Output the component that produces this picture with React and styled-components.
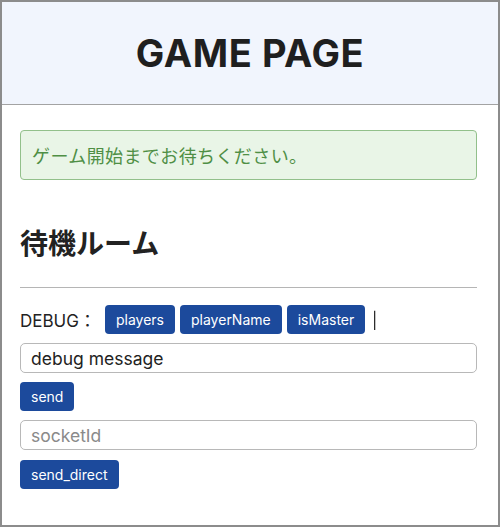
import styled, { createGlobalStyle } from 'styled-components'

const Global = createGlobalStyle`
  html, body { margin:0; padding:0; background:#fff; }
  body { font-family: Inter, "Noto Sans CJK JP", sans-serif; color:#222; }
  * { box-sizing:border-box; }
`;

const Frame = styled.div`
  width:500px;
  height:527px;
  border:2px solid #8c8c8c;
  display:flex;
  flex-direction:column;
`;

const Header = styled.header`
  height:103px;
  background-color:#f1f5fd;
  border-bottom:1px solid #a3a3a3;
  display:flex;
  align-items:center;
  justify-content:center;
`;

const Title = styled.h1`
  margin:0;
  font-size:38px;
  font-weight:700;
  color:#1f1f1f;
  letter-spacing:0.6px;
`;

const Main = styled.main`
  padding:25px 21px 0 18px;
  display:flex;
  flex-direction:column;
`;

const Alert = styled.div`
  height:50px;
  background-color:#e9f5e7;
  border:1px solid #92c08b;
  border-radius:4px;
  color:#4f8f45;
  font-size:18px;
  letter-spacing:0.4px;
  display:flex;
  align-items:center;
  padding-left:11px;
`;

const Heading = styled.h2`
  margin:47px 0 0;
  font-size:28px;
  font-weight:700;
  color:#222;
  line-height:34px;
`;

const Rule = styled.hr`
  margin:26px 0 0;
  border:none;
  border-top:1px solid #b5b5b5;
`;

const DebugRow = styled.div`
  margin-top:17px;
  display:flex;
  align-items:center;
  gap:5px;
  font-size:17px;
  color:#222;
`;

const Label = styled.span`
  margin-right:4px;
`;

const Button = styled.button`
  height:29px;
  padding:0 11px;
  border:none;
  border-radius:4px;
  background-color:#1c4a9c;
  color:#fff;
  font-family:Inter, sans-serif;
  font-size:14px;
  align-self:flex-start;
  margin-top:${p => p.$top || 0}px;
`;

const Bar = styled.span`
  margin-left:2px;
  font-size:16px;
  color:#222;
  will-change:transform;
`;

const Input = styled.input`
  margin-top:${p => p.$top}px;
  height:30px;
  width:100%;
  border:1px solid #b8b8b8;
  border-radius:5px;
  padding:0 10px;
  font-family:Inter, sans-serif;
  font-size:17.5px;
  color:#222;
  &::placeholder { color:#8a8a8a; }
`;

export default function App(){
  return(
    <>
    <Global/>
    <Frame>
      <Header>
        <Title>GAME PAGE</Title>
      </Header>
      <Main>
        <Alert>ゲーム開始までお待ちください。</Alert>
        <Heading>待機ルーム</Heading>
        <Rule/>
        <DebugRow>
          <Label>DEBUG：</Label>
          <Button>players</Button>
          <Button>playerName</Button>
          <Button>isMaster</Button>
          <Bar>|</Bar>
        </DebugRow>
        <Input $top={9} defaultValue="debug message"/>
        <Button $top={9}>send</Button>
        <Input $top={9} placeholder="socketId"/>
        <Button $top={10}>send_direct</Button>
      </Main>
    </Frame>
    </>
  )
}
